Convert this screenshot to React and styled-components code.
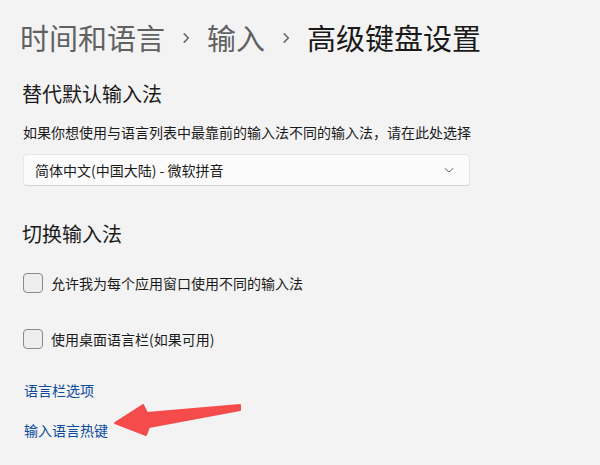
import React from "react";
import styled, { createGlobalStyle } from "styled-components";

const Global = createGlobalStyle`
  html, body { margin: 0; padding: 0; background: #f3f3f3; }
  body { font-family: "Noto Sans CJK SC", "Noto Sans", sans-serif; color: #1b1b1b; }
`;

const Page = styled.div`
  position: relative;
  width: 600px;
  height: 465px;
  overflow: hidden;
  padding: 17px 0 0 20px;
  box-sizing: border-box;
  display: flex;
  flex-direction: column;
`;

const Breadcrumb = styled.div`
  display: flex;
  align-items: center;
  height: 41px;
  font-size: 29px;
  line-height: 41px;
`;

const Crumb = styled.span`
  color: ${(p) => (p.$current ? "#1a1a1a" : "#616161")};
`;

const Sep = styled.span`
  display: flex;
  align-items: center;
  justify-content: center;
  width: 42px;
  color: #6a6a6a;
`;

const Section = styled.div`
  display: flex;
  flex-direction: column;
  padding-left: 3px;
`;

const Heading = styled.div`
  font-size: 20px;
  line-height: 28px;
  height: 28px;
  margin-top: ${(p) => p.$mt}px;
  margin-left: -1px;
  color: #1b1b1b;
`;

const Desc = styled.div`
  font-size: 14px;
  line-height: 20px;
  margin-top: 14px;
  color: #1b1b1b;
`;

const Select = styled.div`
  margin-top: 12px;
  width: 447px;
  height: 32px;
  box-sizing: border-box;
  background: #fbfbfb;
  border: 1px solid #e6e6e6;
  border-bottom-color: #d2d2d2;
  border-radius: 4px;
  display: flex;
  align-items: center;
  justify-content: space-between;
  padding: 0 14px 0 11px;
  font-size: 14px;
  color: #1b1b1b;
`;

const CheckRow = styled.label`
  display: flex;
  align-items: center;
  gap: 8px;
  height: 40px;
  margin-top: ${(p) => p.$mt}px;
  font-size: 14px;
  color: #1b1b1b;
`;

const Box = styled.span`
  width: 20px;
  height: 20px;
  box-sizing: border-box;
  border: 1px solid #8a8a8a;
  border-radius: 4px;
  background: #ededed;
  flex: none;
`;

const Link = styled.a`
  display: block;
  font-size: 14px;
  line-height: 20px;
  margin-top: ${(p) => p.$mt}px;
  margin-left: 1px;
  color: #0e4b9e;
  text-decoration: none;
  cursor: pointer;
`;

const Arrow = styled.svg`
  position: absolute;
  left: 0;
  top: 0;
  pointer-events: none;
`;

const Chevron = ({ size = 12, color = "#6a6a6a", w = 1.4 }) => (
  <svg width={size} height={size} viewBox="0 0 12 12">
    <path d="M4.5 2.5 L8 6 L4.5 9.5" fill="none" stroke={color} strokeWidth={w} strokeLinecap="round" strokeLinejoin="round" />
  </svg>
);

const Down = () => (
  <svg width="12" height="12" viewBox="0 0 12 12">
    <path d="M2 4.5 L6 8 L10 4.5" fill="none" stroke="#5f5f5f" strokeWidth="1" strokeLinecap="round" strokeLinejoin="round" />
  </svg>
);

export default function App() {
  return (
    <>
      <Global />
      <Page>
        <Breadcrumb>
          <Crumb>时间和语言</Crumb>
          <Sep><Chevron size={14} /></Sep>
          <Crumb>输入</Crumb>
          <Sep><Chevron size={14} /></Sep>
          <Crumb $current>高级键盘设置</Crumb>
        </Breadcrumb>
        <Section>
          <Heading $mt={22}>替代默认输入法</Heading>
          <Desc>如果你想使用与语言列表中最靠前的输入法不同的输入法，请在此处选择</Desc>
          <Select>
            <span>简体中文(中国大陆) - 微软拼音</span>
            <Down />
          </Select>
          <Heading $mt={34}>切换输入法</Heading>
          <CheckRow $mt={15}>
            <Box />
            允许我为每个应用窗口使用不同的输入法
          </CheckRow>
          <CheckRow $mt={16}>
            <Box />
            使用桌面语言栏(如果可用)
          </CheckRow>
          <Link $mt={21}>语言栏选项</Link>
          <Link $mt={20}>输入语言热键</Link>
        </Section>
        <Arrow width="600" height="465" viewBox="0 0 600 465">
          <polygon
            points="115,423 143,405 147,413 240,405 240,410 149,427 146,435"
            fill="#f44b4b"
            stroke="#f44b4b"
            strokeWidth="2"
            strokeLinejoin="round"
          />
        </Arrow>
      </Page>
    </>
  );
}
